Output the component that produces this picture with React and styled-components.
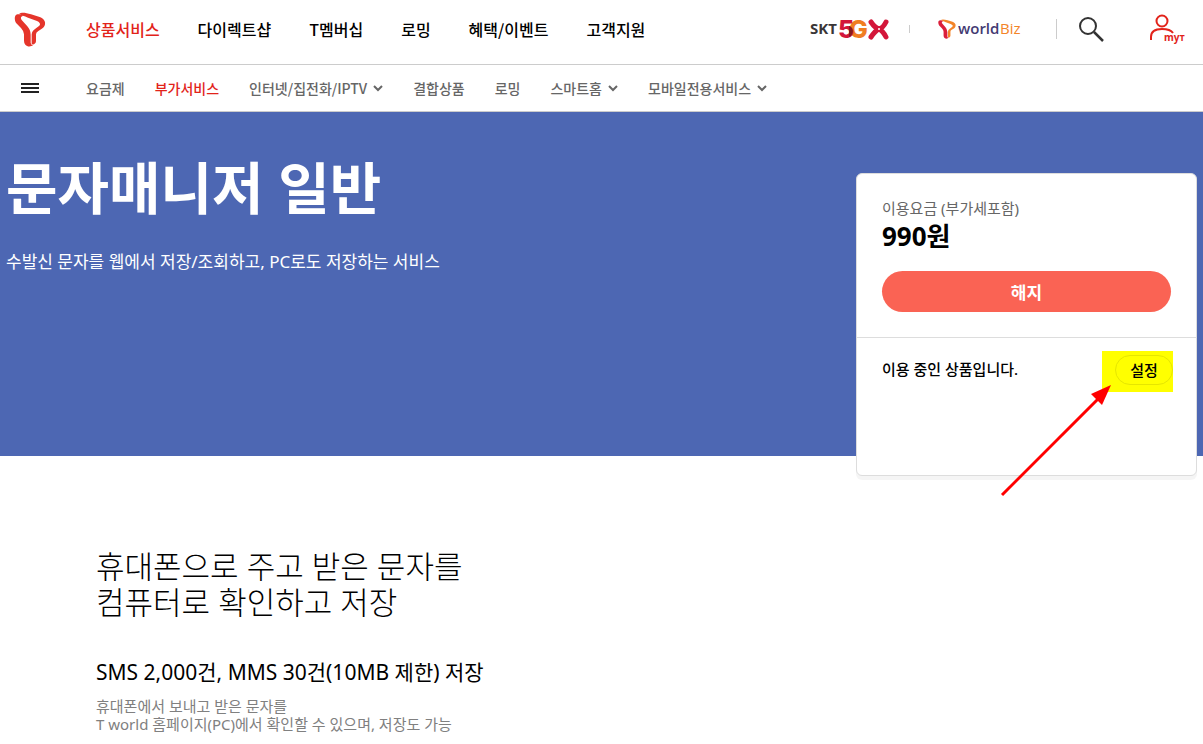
import React from 'react';
import styled, { createGlobalStyle } from 'styled-components';

const GlobalStyle = createGlobalStyle`
  * {
    box-sizing: border-box;
  }
  body {
    margin: 0;
    background: #fff;
    color: #000;
    font-family: 'Noto Sans', 'Noto Sans CJK KR', sans-serif;
  }
  h1, h2, h3, p, ul {
    margin: 0;
    padding: 0;
  }
  ul {
    list-style: none;
  }
  a {
    color: inherit;
    text-decoration: none;
  }
  button {
    margin: 0;
    padding: 0;
    border: 0;
    background: transparent;
    color: inherit;
    font-family: inherit;
    cursor: pointer;
  }
  svg {
    display: block;
  }
`;

const Header = styled.header`
  display: flex;
  align-items: center;
  height: 65px;
  padding: 0 17px 6px 14px;
  border-bottom: 1px solid #ccc;
`;

const Logo = styled.a`
  width: 72px;
`;

const MainMenu = styled.ul`
  display: flex;
  gap: 38px;
  font-family: 'Noto Sans CJK KR', sans-serif;
  font-size: 16px;
  font-weight: 500;
  line-height: 24px;
  white-space: nowrap;
`;

const MenuLink = styled.a`
  color: ${props => (props.$active ? '#e2231a' : 'inherit')};
`;

const Utilities = styled.div`
  display: flex;
  align-items: center;
  margin-left: auto;
`;

const Divider = styled.span`
  width: 1px;
  height: ${props => (props.$tall ? '20px' : '8px')};
  margin: ${props => (props.$tall ? '0 22px 0 34px' : '0 28px 0 20px')};
  background: #ccc;
`;

const IconButton = styled.button`
  margin-right: ${props => (props.$spaced ? '46px' : '0')};
`;

const SubNav = styled.nav`
  display: flex;
  align-items: center;
  height: 47px;
  padding-left: 21px;
  border-bottom: 1px solid #ccc;
`;

const MenuToggle = styled.button`
  width: 65px;
`;

const SubMenu = styled.ul`
  display: flex;
  gap: 30px;
  color: #666;
  font-family: 'Noto Sans CJK KR', sans-serif;
  font-size: 14px;
  font-weight: 500;
  line-height: 22px;
  white-space: nowrap;
`;

const SubLink = styled(MenuLink)`
  display: flex;
  align-items: center;
  gap: 6px;
`;

const Hero = styled.section`
  display: flex;
  justify-content: space-between;
  padding: 0 6px;
  background: #4d67b3;
`;

const HeroText = styled.div`
  padding-top: 39px;
  color: #fff;
`;

const Title = styled.h1`
  font-size: 56px;
  font-weight: 700;
  line-height: 72px;
`;

const Summary = styled.p`
  margin-top: 27px;
  font-size: 17px;
  line-height: 24px;
`;

const Card = styled.aside`
  position: relative;
  width: 341px;
  margin: 61px 0 -20px;
  border: 1px solid #ddd;
  border-radius: 6px;
  background: #fff;
  box-shadow: 0 4px 0 rgba(0, 0, 0, 0.04);
`;

const PriceBox = styled.div`
  padding: 24px 25px 25px;
  border-bottom: 1px solid #ddd;
`;

const PriceLabel = styled.p`
  color: #666;
  font-size: 15px;
  line-height: 20px;
`;

const Price = styled.p`
  font-size: 26px;
  font-weight: 700;
  line-height: 36px;
`;

const CancelButton = styled.button`
  display: block;
  width: 100%;
  height: 41px;
  margin-top: 17px;
  border-radius: 21px;
  background: #fa6354;
  color: #fff;
  font-size: 17px;
  font-weight: 700;
`;

const StatusBox = styled.div`
  display: flex;
  align-items: flex-start;
  justify-content: space-between;
  min-height: 137px;
  padding: 13px 23px 0 25px;
`;

const StatusText = styled.p`
  font-size: 15px;
  font-weight: 500;
  line-height: 36px;
`;

const Highlight = styled.div`
  padding: 4px 0 7px 13px;
  background: #ff0;
`;

const SettingButton = styled.button`
  display: block;
  width: 58px;
  height: 30px;
  border: 1px solid #e6e600;
  border-radius: 15px;
  font-size: 15px;
  font-weight: 500;
  line-height: 26px;
`;

const Arrow = styled.svg`
  position: absolute;
  top: 210px;
  right: 84px;
  pointer-events: none;
`;

const Content = styled.main`
  padding: 92px 96px 0;
`;

const Heading = styled.h2`
  font-size: 31px;
  font-weight: 300;
  line-height: 36px;
`;

const SubHeading = styled.h3`
  margin-top: 38px;
  font-size: 21px;
  font-weight: 400;
  line-height: 28px;
`;

const Description = styled.p`
  margin-top: 11px;
  color: #808080;
  font-size: 15px;
  line-height: 18px;
`;

const menu = ['상품서비스', '다이렉트샵', 'T멤버십', '로밍', '혜택/이벤트', '고객지원'];

const subMenu = [
  { label: '요금제' },
  { label: '부가서비스' },
  { label: '인터넷/집전화/IPTV', more: true },
  { label: '결합상품' },
  { label: '로밍' },
  { label: '스마트홈', more: true },
  { label: '모바일전용서비스', more: true },
];

const Ribbon = ({ width, height, left, right }) => (
  <svg width={width} height={height} viewBox="44 34 92 105" aria-hidden="true">
    <path
      fill={right}
      d="M58 39C64 34 78 36 93 41L119 49C130 53 137 61 135 71C134 80 125 86 115 91Q108 95 108 101V122C107 131 99 133 95 130V101C96 92 101 88 108 83L118 75C123 70 119 64 109 60L84 51Q66 45 59 41Z"
    />
    <path
      fill={left}
      d="M46 45C51 39 60 40 72 46C64 46 60 50 65 58L82 77Q92 88 92 102V126Q92 133 99 133C93 139 82 139 76 132Q72 128 72 120V101Q72 92 63 82L49 68C44 61 43 50 46 45Z"
    />
  </svg>
);

const FiveGx = () => (
  <svg width="79" height="36" viewBox="0 0 79 36" fontFamily="Inter, sans-serif">
    <text x="0" y="23" fontFamily="Noto Sans, sans-serif" fontSize="15" fontWeight="700" fill="#3a3637">SKT</text>
    <text x="39" y="27" fontSize="25" fontWeight="800" fill="#f07d22">G</text>
    <text x="28" y="27" fontSize="25" fontWeight="800" fill="#d3163a">5</text>
    <path d="M40 15Q45 19 41 25L39 26V15Z" fill="#861b1e" />
    <path
      d="M61 11Q65 17 69 18Q73 17 76 11M61 26Q65 20 69 18Q73 20 76 26"
      fill="none"
      stroke="#d3163a"
      strokeWidth="5"
      strokeLinecap="round"
    />
    <circle cx="69" cy="18" r="1" fill="#fff" />
  </svg>
);

const BizLogo = styled.a`
  display: flex;
  align-items: center;
  gap: 2px;
`;

const Chevron = () => (
  <svg width="10" height="8" viewBox="0 0 10 8" aria-hidden="true">
    <path d="M1 2L5 6L9 2" fill="none" stroke="#666" strokeWidth="2" />
  </svg>
);

const SiteHeader = () => (
  <Header>
    <Logo href="#" aria-label="T world">
      <Ribbon width="32" height="35" left="#e5352b" right="#e5352b" />
    </Logo>
    <nav>
      <MainMenu>
        {menu.map((label, i) => (
          <li key={label}><MenuLink href="#" $active={i === 0}>{label}</MenuLink></li>
        ))}
      </MainMenu>
    </nav>
    <Utilities>
      <a href="#"><FiveGx /></a>
      <Divider />
      <BizLogo href="#">
        <Ribbon width="18" height="20" left="#db1e3a" right="#f38428" />
        <svg width="64" height="24" viewBox="0 0 64 24" fontSize="15">
          <text x="0" y="17" fontFamily="Open Sans, sans-serif" fontWeight="600" fill="#433a72">world</text>
          <text x="42" y="17" fontFamily="Open Sans, sans-serif" fontWeight="500" fill="#f38428">Biz</text>
        </svg>
      </BizLogo>
      <Divider $tall />
      <IconButton type="button" $spaced aria-label="검색">
        <svg width="25" height="25" viewBox="0 0 25 25" fill="none" stroke="#333" strokeWidth="2">
          <circle cx="9" cy="9" r="8" />
          <path d="M15 15L24 24" strokeWidth="2.500" />
        </svg>
      </IconButton>
      <IconButton type="button">
        <svg width="36" height="32" viewBox="0 0 36 32">
          <g fill="none" stroke="#e2231a" strokeWidth="2">
            <circle cx="12" cy="8" r="5.500" />
            <path d="M1 27V24C1 18 6 16 12 16C17 16 21 17 23 20" />
          </g>
          <text x="14" y="28" fontSize="10" fontWeight="700" fill="#e2231a">
            my<tspan fontSize="9">T</tspan>
          </text>
        </svg>
      </IconButton>
    </Utilities>
  </Header>
);

const SiteSubNav = () => (
  <SubNav>
    <MenuToggle type="button" aria-label="전체메뉴">
      <svg width="18" height="10" viewBox="0 0 18 10">
        <path d="M0 1H18M0 5H18M0 9H18" stroke="#222" strokeWidth="2" />
      </svg>
    </MenuToggle>
    <SubMenu>
      {subMenu.map((item, i) => (
        <li key={item.label}>
          <SubLink href="#" $active={i === 1}>
            {item.label}
            {item.more && <Chevron />}
          </SubLink>
        </li>
      ))}
    </SubMenu>
  </SubNav>
);

const ProductCard = () => (
  <Card>
    <PriceBox>
      <PriceLabel>이용요금 (부가세포함)</PriceLabel>
      <Price>990원</Price>
      <CancelButton type="button">해지</CancelButton>
    </PriceBox>
    <StatusBox>
      <StatusText>이용 중인 상품입니다.</StatusText>
      <Highlight>
        <SettingButton type="button">설정</SettingButton>
      </Highlight>
    </StatusBox>
    <Arrow width="112" height="113" viewBox="0 0 112 113" aria-hidden="true">
      <path d="M2 111L99 14" stroke="#f00" strokeWidth="3" />
      <path d="M111 1L91 10L102 21Z" fill="#f00" />
    </Arrow>
  </Card>
);

const App = () => (
  <>
    <GlobalStyle />
    <SiteHeader />
    <SiteSubNav />
    <Hero>
      <HeroText>
        <Title>문자매니저 일반</Title>
        <Summary>수발신 문자를 웹에서 저장/조회하고, PC로도 저장하는 서비스</Summary>
      </HeroText>
      <ProductCard />
    </Hero>
    <Content>
      <Heading>
        휴대폰으로 주고 받은 문자를
        <br />
        컴퓨터로 확인하고 저장
      </Heading>
      <SubHeading>SMS 2,000건, MMS 30건(10MB 제한) 저장</SubHeading>
      <Description>
        휴대폰에서 보내고 받은 문자를
        <br />
        T world 홈페이지(PC)에서 확인할 수 있으며, 저장도 가능
      </Description>
    </Content>
  </>
);

export default App;
